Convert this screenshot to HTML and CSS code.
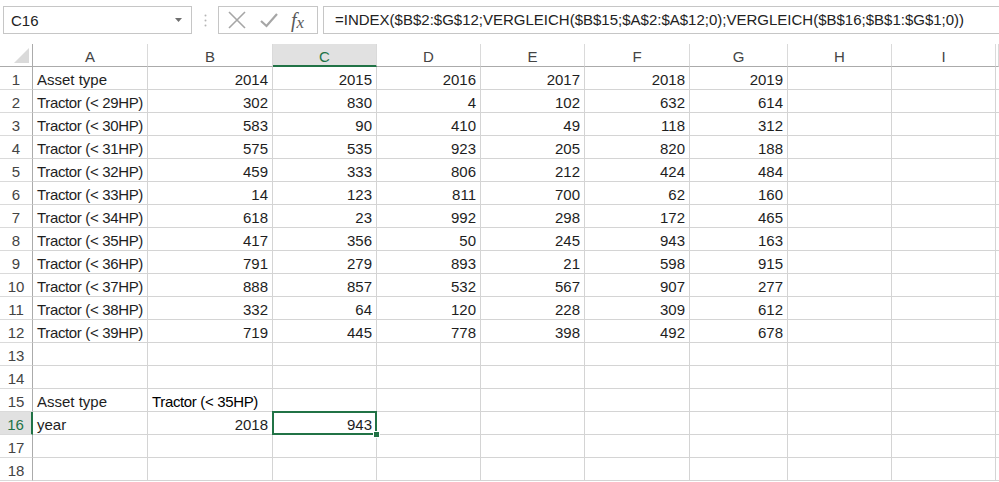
FILE: index.html
```html
<!DOCTYPE html>
<html lang="de">
<head>
    <meta charset="UTF-8">
    <title>Mappe1 - Excel</title>
    <link rel="stylesheet" href="styles.css">
</head>
<body>
    <div class="formula-bar">
        <div class="name-box">
            <span>C16</span>
            <svg class="drop" width="7" height="4" viewBox="0 0 7 4"><polygon points="0,0 7,0 3.5,4" fill="#6f6f6f"/></svg>
        </div>
        <div class="grip">
            <svg width="3" height="13" viewBox="0 0 3 13"><circle cx="1.5" cy="1.5" r="1" fill="#b5b5b5"/><circle cx="1.5" cy="6.5" r="1" fill="#b5b5b5"/><circle cx="1.5" cy="11.5" r="1" fill="#b5b5b5"/></svg>
        </div>
        <div class="fx-buttons">
            <svg width="18" height="18" viewBox="0 0 18 18"><path d="M1 1 L17 17 M17 1 L1 17" stroke="#a6a6a6" stroke-width="1.6" fill="none"/></svg>
            <svg width="18" height="16" viewBox="0 0 18 16"><path d="M1 9 L6.5 14 L17 2" stroke="#a6a6a6" stroke-width="2.2" fill="none"/></svg>
            <span class="fx">f<span class="fx-x">x</span></span>
        </div>
        <div class="formula-input">=INDEX($B$2:$G$12;VERGLEICH($B$15;$A$2:$A$12;0);VERGLEICH($B$16;$B$1:$G$1;0))</div>
    </div>

    <div class="sheet">
        <div class="hd corner"><svg width="15" height="15" viewBox="0 0 15 15"><polygon points="15,0 15,15 0,15" fill="#dadada"/></svg></div>
        <div class="hd col">A</div><div class="hd col">B</div><div class="hd col active-col">C</div><div class="hd col">D</div><div class="hd col">E</div><div class="hd col">F</div><div class="hd col">G</div><div class="hd col">H</div><div class="hd col">I</div><div class="hd col"></div>

        <div class="hd rn">1</div><div class="c">Asset type</div><div class="c n">2014</div><div class="c n">2015</div><div class="c n">2016</div><div class="c n">2017</div><div class="c n">2018</div><div class="c n">2019</div><div class="c"></div><div class="c"></div><div class="c"></div>
        <div class="hd rn">2</div><div class="c t">Tractor (&lt; 29HP)</div><div class="c n">302</div><div class="c n">830</div><div class="c n">4</div><div class="c n">102</div><div class="c n">632</div><div class="c n">614</div><div class="c"></div><div class="c"></div><div class="c"></div>
        <div class="hd rn">3</div><div class="c t">Tractor (&lt; 30HP)</div><div class="c n">583</div><div class="c n">90</div><div class="c n">410</div><div class="c n">49</div><div class="c n">118</div><div class="c n">312</div><div class="c"></div><div class="c"></div><div class="c"></div>
        <div class="hd rn">4</div><div class="c t">Tractor (&lt; 31HP)</div><div class="c n">575</div><div class="c n">535</div><div class="c n">923</div><div class="c n">205</div><div class="c n">820</div><div class="c n">188</div><div class="c"></div><div class="c"></div><div class="c"></div>
        <div class="hd rn">5</div><div class="c t">Tractor (&lt; 32HP)</div><div class="c n">459</div><div class="c n">333</div><div class="c n">806</div><div class="c n">212</div><div class="c n">424</div><div class="c n">484</div><div class="c"></div><div class="c"></div><div class="c"></div>
        <div class="hd rn">6</div><div class="c t">Tractor (&lt; 33HP)</div><div class="c n">14</div><div class="c n">123</div><div class="c n">811</div><div class="c n">700</div><div class="c n">62</div><div class="c n">160</div><div class="c"></div><div class="c"></div><div class="c"></div>
        <div class="hd rn">7</div><div class="c t">Tractor (&lt; 34HP)</div><div class="c n">618</div><div class="c n">23</div><div class="c n">992</div><div class="c n">298</div><div class="c n">172</div><div class="c n">465</div><div class="c"></div><div class="c"></div><div class="c"></div>
        <div class="hd rn">8</div><div class="c t">Tractor (&lt; 35HP)</div><div class="c n">417</div><div class="c n">356</div><div class="c n">50</div><div class="c n">245</div><div class="c n">943</div><div class="c n">163</div><div class="c"></div><div class="c"></div><div class="c"></div>
        <div class="hd rn">9</div><div class="c t">Tractor (&lt; 36HP)</div><div class="c n">791</div><div class="c n">279</div><div class="c n">893</div><div class="c n">21</div><div class="c n">598</div><div class="c n">915</div><div class="c"></div><div class="c"></div><div class="c"></div>
        <div class="hd rn">10</div><div class="c t">Tractor (&lt; 37HP)</div><div class="c n">888</div><div class="c n">857</div><div class="c n">532</div><div class="c n">567</div><div class="c n">907</div><div class="c n">277</div><div class="c"></div><div class="c"></div><div class="c"></div>
        <div class="hd rn">11</div><div class="c t">Tractor (&lt; 38HP)</div><div class="c n">332</div><div class="c n">64</div><div class="c n">120</div><div class="c n">228</div><div class="c n">309</div><div class="c n">612</div><div class="c"></div><div class="c"></div><div class="c"></div>
        <div class="hd rn">12</div><div class="c t">Tractor (&lt; 39HP)</div><div class="c n">719</div><div class="c n">445</div><div class="c n">778</div><div class="c n">398</div><div class="c n">492</div><div class="c n">678</div><div class="c"></div><div class="c"></div><div class="c"></div>
        <div class="hd rn">13</div><div class="c"></div><div class="c"></div><div class="c"></div><div class="c"></div><div class="c"></div><div class="c"></div><div class="c"></div><div class="c"></div><div class="c"></div><div class="c"></div>
        <div class="hd rn">14</div><div class="c"></div><div class="c"></div><div class="c"></div><div class="c"></div><div class="c"></div><div class="c"></div><div class="c"></div><div class="c"></div><div class="c"></div><div class="c"></div>
        <div class="hd rn">15</div><div class="c">Asset type</div><div class="c t lookup">Tractor (&lt; 35HP)</div><div class="c"></div><div class="c"></div><div class="c"></div><div class="c"></div><div class="c"></div><div class="c"></div><div class="c"></div><div class="c"></div>
        <div class="hd rn active-row">16</div><div class="c">year</div><div class="c n">2018</div><div class="c n selected">943</div><div class="c"></div><div class="c"></div><div class="c"></div><div class="c"></div><div class="c"></div><div class="c"></div><div class="c"></div>
        <div class="hd rn">17</div><div class="c"></div><div class="c"></div><div class="c"></div><div class="c"></div><div class="c"></div><div class="c"></div><div class="c"></div><div class="c"></div><div class="c"></div><div class="c"></div>
        <div class="hd rn">18</div><div class="c"></div><div class="c"></div><div class="c"></div><div class="c"></div><div class="c"></div><div class="c"></div><div class="c"></div><div class="c"></div><div class="c"></div><div class="c"></div>
    </div>
</body>
</html>
```

FILE: styles.css
```css
body {
    margin: 0;
    font-family: "Liberation Sans", Arial, sans-serif;
    font-size: 15px;
    color: #1e1e1e;
    background: #ffffff;
    overflow: hidden;
    width: 999px;
    height: 482px;
}

/* formula bar */
.formula-bar {
    display: flex;
    height: 28px;
    padding: 6px 0 0 3px;
    margin-bottom: 10px;
}
.name-box {
    width: 189px;
    box-sizing: border-box;
    border: 1px solid #c6c6c6;
    display: flex;
    align-items: center;
    justify-content: space-between;
    padding: 0 9px 0 7px;
    color: #222;
}
.grip {
    width: 26px;
    display: flex;
    align-items: center;
    justify-content: center;
}
.fx-buttons {
    width: 100px;
    box-sizing: border-box;
    border: 1px solid #c6c6c6;
    display: flex;
    align-items: center;
    padding: 0 0 0 9px;
    gap: 14px;
}
.fx {
    font-family: "Liberation Serif", "Times New Roman", serif;
    font-style: italic;
    font-size: 20px;
    color: #5a5a5a;
    margin-left: -1px;
}
.fx-x {
    font-size: 17px;
    position: relative;
    top: 1px;
}
.formula-input {
    flex: 1;
    min-width: 0;
    margin-left: 5px;
    border: 1px solid #c6c6c6;
    border-right: none;
    padding-left: 11px;
    line-height: 26px;
    white-space: nowrap;
    overflow: hidden;
    color: #222;
}

/* grid */
.sheet {
    display: grid;
    grid-template-columns: 33px 115px 125px 104px 104px 104px 105px 98px 104px 104px 3px;
    grid-auto-rows: 23px;
}
.sheet > div {
    box-sizing: border-box;
    border-right: 1px solid #d4d4d4;
    border-bottom: 1px solid #d4d4d4;
    line-height: 26px;
    white-space: nowrap;
    overflow: hidden;
}
.c {
    padding: 0 4px;
}
.t {
    letter-spacing: -0.35px;
}
.n {
    text-align: right;
}
.lookup {
    color: #000;
}
.hd {
    color: #444;
    text-align: center;
    background: #fff;
}
.col {
    border-bottom-color: #ababab !important;
    border-right-color: #dadada !important;
}
.rn {
    border-right-color: #ababab !important;
    border-bottom-color: #dadada !important;
}
.corner {
    border-bottom-color: #ababab !important;
    border-right-color: #ababab !important;
    display: flex;
    align-items: flex-end;
    justify-content: flex-end;
    padding: 0 3px 3px 0;
}
.active-col {
    background: #e1e1e1;
    color: #217346;
    border-bottom: 2px solid #217346 !important;
}
.active-row {
    background: #e1e1e1;
    color: #217346;
    border-right: 2px solid #217346 !important;
}
.selected {
    position: relative;
    overflow: visible !important;
}
.selected::after {
    content: "";
    position: absolute;
    top: -1px;
    left: -1px;
    right: -1px;
    bottom: -1px;
    border: 2px solid #217346;
}
.selected::before {
    content: "";
    position: absolute;
    right: -4px;
    bottom: -4px;
    width: 5px;
    height: 5px;
    background: #217346;
    border: 1px solid #fff;
    z-index: 2;
}
```
